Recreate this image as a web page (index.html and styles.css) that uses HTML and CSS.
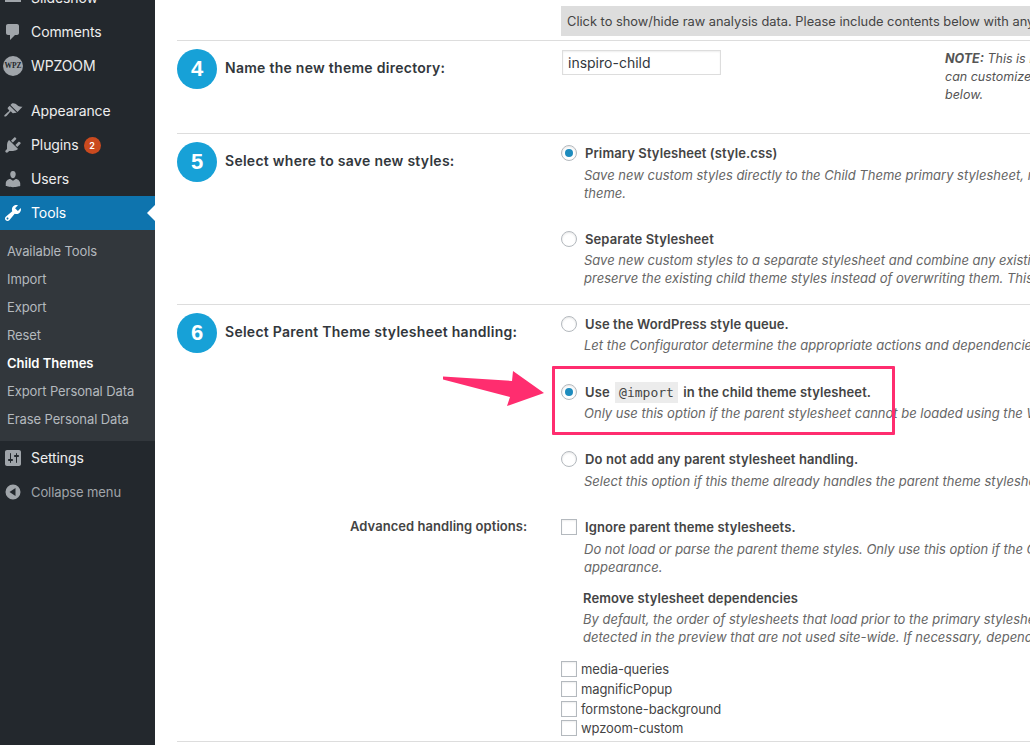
FILE: index.html
```html
<!DOCTYPE html>
<html lang="en">
<head>
<meta charset="utf-8">
<title>Child Themes</title>
<link rel="stylesheet" href="styles.css">
</head>
<body>
<div class="app">
  <nav class="side">
    <ul class="menu top">
      <li class="item"><svg class="ic" viewBox="0 0 20 20"><path d="M2 3h16v11H2z"/></svg>Slideshow</li>
      <li class="item"><svg class="ic" viewBox="0 0 20 20"><path d="M5 2h9c1.100 0 2 .9 2 2v7c0 1.100-.9 2-2 2h-2l-5 5v-5H5c-1.100 0-2-.9-2-2V4c0-1.100.9-2 2-2z"/></svg>Comments</li>
      <li class="item"><span class="wpz">WPZ</span>WPZOOM</li>
    </ul>
    <ul class="menu second">
      <li class="item"><svg class="ic" viewBox="0 0 20 20"><path d="M14.480 11.060 7.410 3.990l1.500-1.500c.5-.56 2.300-.47 3.510.32 1.210.8 1.430 1.280 2.910 2.100 1.180.64 2.450.99 4.170.75zm-.71.71L6.700 4.700 4.930 6.470c-.39.39-.39 1.020 0 1.410l1.060 1.060c.39.39.39 1.030 0 1.420-.6.6-1.430 1.110-2.210 1.690-.35.26-.7.53-1.010.84C1.430 13.710.96 14.840 1.500 15.390c.55.54 1.680.07 2.960-1.290.31-.31.58-.66.84-1.010.58-.78 1.090-1.610 1.690-2.210.39-.39 1.030-.39 1.420 0l1.060 1.060c.39.39 1.020.39 1.410 0z"/></svg>Appearance</li>
      <li class="item"><svg class="ic" viewBox="0 0 20 20"><path d="M13.110 4.360 9.870 7.600 8 5.730l3.240-3.240c.35-.34 1.050-.2 1.560.32.52.51.66 1.210.31 1.550zm-8 1.770.91-1.120 9.010 9.010-1.190.84c-.71.71-2.630 1.160-3.820 1.160H6.140L4.900 17.260c-.59.59-1.540.59-2.120 0-.59-.58-.59-1.530 0-2.120l1.240-1.240v-3.880c0-1.130.4-3.190 1.090-3.890zm7.260 3.970 3.240-3.240c.34-.35 1.040-.21 1.550.31.52.51.66 1.210.31 1.550l-3.240 3.250z"/></svg>Plugins<span class="badge">2</span></li>
      <li class="item"><svg class="ic" viewBox="0 0 20 20"><path d="M10 9.250c-2.270 0-2.730-3.440-2.730-3.440C7 4.020 7.820 2 9.970 2c2.160 0 2.980 2.020 2.710 3.810 0 0-.41 3.440-2.680 3.440zm0 2.570L12.720 10c2.390 0 4.520 2.330 4.520 4.530v2.490s-3.650 1.130-7.240 1.130c-3.650 0-7.240-1.130-7.240-1.130v-2.490c0-2.250 1.940-4.480 4.470-4.480z"/></svg>Users</li>
      <li class="item current"><svg class="ic" viewBox="0 0 20 20"><path fill-rule="evenodd" d="M16.680 9.770c-1.340 1.340-3.300 1.670-4.950.99l-5.410 6.520c-.99.99-2.590.99-3.580 0s-.99-2.590 0-3.570l6.520-5.420c-.68-1.650-.35-3.610.99-4.950 1.280-1.280 3.120-1.620 4.720-1.060l-2.890 2.890 2.820 2.820 2.860-2.870c.53 1.580.18 3.390-1.080 4.650zM3.810 16.210c.4.39 1.040.39 1.430 0 .4-.4.4-1.040 0-1.430-.39-.4-1.030-.4-1.430 0-.39.39-.39 1.030 0 1.430z"/></svg>Tools</li>
    </ul>
    <ul class="sub">
      <li>Available Tools</li>
      <li>Import</li>
      <li>Export</li>
      <li>Reset</li>
      <li class="on">Child Themes</li>
      <li>Export Personal Data</li>
      <li>Erase Personal Data</li>
    </ul>
    <ul class="menu third">
      <li class="item strong"><svg class="ic" viewBox="0 0 20 20"><path fill-rule="evenodd" d="M18 16V4c0-1.100-.9-2-2-2H4c-1.100 0-2 .9-2 2v12c0 1.100.9 2 2 2h12c1.100 0 2-.9 2-2zM8 11h1c.55 0 1 .45 1 1s-.45 1-1 1H8v1.500c0 .28-.22.5-.5.5s-.5-.22-.5-.5V13H6c-.55 0-1-.45-1-1s.45-1 1-1h1V5.500c0-.28.22-.5.5-.5s.5.22.5.5V11zm5-2h-1c-.55 0-1-.45-1-1s.45-1 1-1h1V5.500c0-.28.22-.5.5-.5s.5.22.5.5V7h1c.55 0 1 .45 1 1s-.45 1-1 1h-1v5.500c0 .28-.22.5-.5.5s-.5-.22-.5-.5V9z"/></svg>Settings</li>
      <li class="item collapse"><svg class="ic" viewBox="0 0 20 20"><path fill-rule="evenodd" d="M10 2.500a7.500 7.500 0 1 1 0 15 7.500 7.500 0 0 1 0-15zM12.500 6 6.500 10l6 4z"/></svg>Collapse menu</li>
    </ul>
  </nav>

  <main class="main">
    <div class="rawbar-row">
      <div class="rawbar">Click to show/hide raw analysis data. Please include contents below with any support requests.</div>
    </div>

    <section class="row row4">
      <div class="head"><span class="num">4</span><h3>Name the new theme directory:</h3></div>
      <div class="field"><input class="text" type="text" value="inspiro-child"></div>
      <p class="note"><b>NOTE:</b> This is NOT the name of the Child Theme. You<br>can customize the name, description, etc. in step 7,<br>below.</p>
    </section>

    <section class="row row5">
      <div class="head"><span class="num">5</span><h3>Select where to save new styles:</h3></div>
      <div class="opts">
        <div class="opt gap34">
          <span class="radio checked"></span>
          <div><div class="lab">Primary Stylesheet (style.css)</div>
          <p class="desc">Save new custom styles directly to the Child Theme primary stylesheet, replacing the existing values.<br>theme.</p></div>
        </div>
        <div class="opt">
          <span class="radio"></span>
          <div><div class="lab">Separate Stylesheet</div>
          <p class="desc">Save new custom styles to a separate stylesheet and combine any existing child theme styles with the parent.<br>preserve the existing child theme styles instead of overwriting them. This option also allows you to customize</p></div>
        </div>
      </div>
    </section>

    <section class="row row6">
      <div class="head"><span class="num">6</span><h3>Select Parent Theme stylesheet handling:</h3></div>
      <div class="opts">
        <div class="opt gap6a">
          <span class="radio"></span>
          <div><div class="lab">Use the WordPress style queue.</div>
          <p class="desc">Let the Configurator determine the appropriate actions and dependencies and update the functions file.</p></div>
        </div>
        <div class="opt gap6b">
          <span class="radio checked"></span>
          <div><div class="lab">Use <code>@import</code> in the child theme stylesheet.</div>
          <p class="desc">Only use this option if the parent stylesheet cannot be loaded using the WordPress style queue.</p></div>
        </div>
        <div class="opt last">
          <span class="radio"></span>
          <div><div class="lab">Do not add any parent stylesheet handling.</div>
          <p class="desc">Select this option if this theme already handles the parent theme stylesheet.</p></div>
        </div>
      </div>

      <div class="adv-label">Advanced handling options:</div>
      <div class="adv">
        <div class="opt">
          <span class="check"></span>
          <div><div class="lab">Ignore parent theme stylesheets.</div>
          <p class="desc">Do not load or parse the parent theme styles. Only use this option if the Child Theme uses a Framework or<br>appearance.</p></div>
        </div>
        <div class="dep">
          <div class="lab">Remove stylesheet dependencies</div>
          <p class="desc">By default, the order of stylesheets that load prior to the primary stylesheet is preserved by treating them as<br>detected in the preview that are not used site-wide. If necessary, dependencies can be removed here:</p>
        </div>
        <ul class="checks">
          <li><span class="check"></span>media-queries</li>
          <li><span class="check"></span>magnificPopup</li>
          <li><span class="check"></span>formstone-background</li>
          <li><span class="check"></span>wpzoom-custom</li>
        </ul>
      </div>
    </section>
  </main>
</div>

<div class="callout"></div>
<svg class="arrow" viewBox="0 0 105 40"><path d="M2 7.500 71 12 72 2 103 24 66 37 69 28 2 10.500z"/></svg>
</body>
</html>
```

FILE: styles.css
```css
* { box-sizing: border-box; }
html, body { margin: 0; height: 745px; overflow: hidden; background: #fff; }
body { font-family: Inter, "Liberation Sans", sans-serif; font-size: 13px; color: #444; position: relative; }
ul { list-style: none; margin: 0; padding: 0; }
p, h3 { margin: 0; }

.app { display: flex; width: 1030px; height: 745px; overflow: hidden; }

.side { flex: 0 0 155px; width: 155px; background: #23282d; height: 745px; overflow: hidden; }
.menu.top { margin-top: -19px; }
.menu.second { margin-top: 11px; }
.item { height: 34px; display: flex; align-items: center; color: #eee; font-size: 14px; letter-spacing: -.1px; padding: 0 0 2px 31px; position: relative; }
.ic { position: absolute; left: 3px; top: 7px; width: 20px; height: 20px; fill: #a0a5aa; }
.wpz { position: absolute; left: 3px; top: 7px; width: 20px; height: 20px; border-radius: 50%; background: #a0a5aa; color: #23282d; font: 700 7.500px/20px "Liberation Serif", serif; letter-spacing: 0; text-align: center; }
.badge { width: 17px; height: 17px; margin: 2px 0 0 5px; border-radius: 50%; background: #ca4a1f; color: #fff; font-size: 9px; font-weight: 600; line-height: 17px; text-align: center; }
.current { background: #0e74ae; color: #fff; }
.current .ic { fill: #fff; }
.current::after { content: ""; position: absolute; right: 0; top: 9px; border: 8px solid transparent; border-left: 0; border-right-color: #fff; }
.sub { background: #32373c; padding: 7px 0 8px; }
.sub li { height: 28px; line-height: 28px; padding-left: 7px; color: #b4b9be; font-size: 13px; letter-spacing: -.1px; }
.sub .on { color: #fff; font-weight: 600; letter-spacing: 0; }
.collapse { color: #a0a5aa; font-size: 13px; padding-bottom: 0; }

.main { flex: 1; min-width: 0; padding-left: 22px; overflow: hidden; }
.rawbar-row { height: 40px; padding: 6px 0 0 384px; }
.rawbar { height: 30px; width: 700px; background: #ddd; color: #444; line-height: 31px; padding-left: 6px; font-size: 12.850px; white-space: nowrap; }

.row { border-top: 1px solid #ddd; position: relative; display: grid; grid-template-columns: 384px 384px 1fr; width: 1000px; }
.row4 { height: 93px; padding-top: 8px; }
.row5 { height: 171px; padding-top: 8px; }
.row6 { height: 438px; padding-top: 8px; border-bottom: 1px solid #ddd; }
.head { display: flex; align-items: center; height: 40px; }
.num { flex: 0 0 40px; width: 40px; height: 40px; border-radius: 50%; background: #17a1d7; color: #fff; font: 700 22px/39px "Liberation Sans", sans-serif; text-align: center; }
h3 { margin: 0 0 4px 8px; font-size: 14px; font-weight: 600; letter-spacing: .27px; color: #32373c; white-space: nowrap; }

.field { padding-top: 1px; }
.text { width: 159px; height: 25px; border: 1px solid #ddd; box-shadow: inset 0 1px 2px rgba(0,0,0,.07); padding: 0 5px; font: 14px Inter, sans-serif; color: #32373c; display: block; margin-left: 1px; }
.note { font-style: italic; font-size: 12.500px; line-height: 18px; color: #555; margin-top: 1px; white-space: nowrap; }

.opts { grid-column: 2 / 4; padding-top: 2px; }
.opt { display: flex; align-items: flex-start; gap: 8px; white-space: nowrap; }
.gap34 { margin-bottom: 28px; }
.gap34 .desc { margin-top: 4px; }
.gap6a { margin-bottom: 29px; }
.gap6b { margin-bottom: 28px; }
.gap6b .desc { margin-top: 2px; }
.last .desc { margin-top: 4px; }
.radio { flex: 0 0 16px; width: 16px; height: 16px; margin-top: 1px; border: 1px solid #b4b9be; border-radius: 50%; background: #fff; box-shadow: inset 0 1px 2px rgba(0,0,0,.1); position: relative; }
.checked::after { content: ""; position: absolute; left: 3px; top: 3px; width: 8px; height: 8px; border-radius: 50%; background: #1e8cbe; }
.check { flex: 0 0 16px; width: 16px; height: 16px; border: 1px solid #b4b9be; background: #fff; box-shadow: inset 0 1px 2px rgba(0,0,0,.07); display: inline-block; }
.lab { font-size: 13px; font-weight: 600; letter-spacing: .1px; color: #444; line-height: 18px; }
.desc { font-size: 13px; font-style: italic; color: #666; line-height: 18px; margin: 3px 0 0 -1px; }
code { font: 13px/18px "DejaVu Sans Mono", monospace; letter-spacing: 0; background: #ececec; padding: 3px 4px; margin: 0 2px; }

.adv-label { position: absolute; left: 173px; top: 213px; font-size: 13px; font-weight: 600; letter-spacing: .05px; color: #444; white-space: nowrap; }
.adv { position: absolute; left: 384px; top: 214px; width: 700px; }
.adv .opt .lab { margin-top: -1px; }
.adv .opt .desc { margin-top: 4px; }
.dep { margin-top: 13px; margin-left: 22px; white-space: nowrap; }
.dep .desc { margin-left: 0; }
.checks { margin-top: 13.500px; }
.checks li { display: flex; align-items: center; gap: 4px; height: 19.700px; color: #444; font-size: 13px; letter-spacing: -.1px; }

.callout { position: absolute; left: 552px; top: 366px; width: 343px; height: 69px; border: 3px solid #ff2d6f; border-radius: 1px; }
.arrow { position: absolute; left: 441px; top: 369px; width: 105px; height: 40px; fill: #ff2d6f; }
```
